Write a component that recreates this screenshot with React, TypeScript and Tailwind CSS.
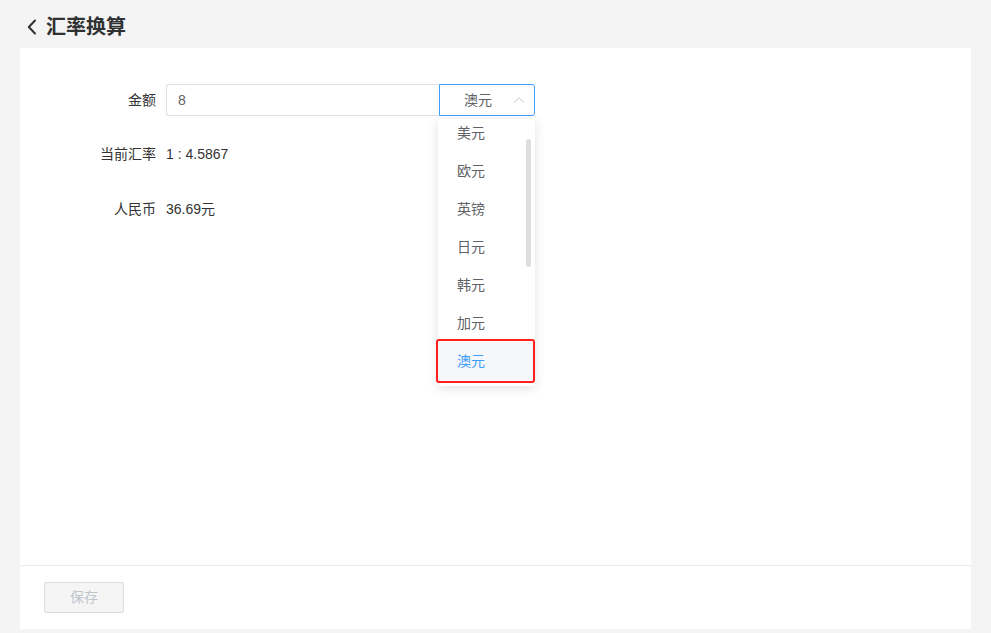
import { ChevronUp } from "lucide-react";

const currencies = ["美元", "欧元", "英镑", "日元", "韩元", "加元", "澳元"];

export default function App() {
  const selected = "澳元";

  return (
    <div className="flex h-[633px] flex-col bg-[#f4f4f4] text-[14px] text-[#333] [font-family:'Liberation_Sans','Noto_Sans_CJK_SC',sans-serif]">
      <header className="flex h-[48px] items-center gap-[9px] pl-[27px] pt-[5px]">
        <svg width="10" height="16" viewBox="0 0 10 16" className="text-[#303133]">
          <polyline points="8,1.5 1.8,8 8,14.5" fill="none" stroke="currentColor" strokeWidth="2" strokeLinecap="round" strokeLinejoin="round" />
        </svg>
        <h1 className="text-[20px] font-bold leading-none text-[#303133]">汇率换算</h1>
      </header>

      <main className="mx-[20px] mb-[4px] flex flex-1 flex-col bg-white">
        <div className="flex-1 pt-[36px]">
          <div className="flex items-center">
            <label className="w-[146px] pr-[10px] text-right">金额</label>
            <div className="flex h-[32px] w-[273px] items-center rounded-l-[3px] border border-r-0 border-[#dcdfe6] px-[11px] text-[#606266]">
              8
            </div>
            <div className="relative">
              <div className="flex h-[32px] w-[96px] items-center rounded-r-[3px] border border-[#409eff] pl-[24px] pr-[6px] text-[#606266]">
                <span className="flex-1">{selected}</span>
                <ChevronUp className="h-[18px] w-[18px] text-[#c0c4cc]" strokeWidth={1.3} />
              </div>
              <div className="absolute left-[-1px] top-[35px] z-10 h-[267px] w-[97px] rounded-[3px] bg-white shadow-[0_2px_12px_rgba(0,0,0,0.12)]">
                <div className="h-full overflow-hidden">
                  <ul className="-mt-[5px]">
                    {currencies.map((c) => (
                      <li
                        key={c}
                        className={
                          c === selected
                            ? "flex h-[38px] items-center bg-[#f5f7fa] pl-[19px] text-[#409eff]"
                            : "flex h-[38px] items-center pl-[19px] text-[#606266]"
                        }
                      >
                        {c}
                      </li>
                    ))}
                  </ul>
                </div>
                <div className="absolute right-[4px] top-[20px] h-[128px] w-[5px] rounded-full bg-[#dddee0]" />
                <div className="absolute left-[-2px] top-[220px] h-[44px] w-[99px] rounded-[3px] border-2 border-[#ff1f1f]" />
              </div>
            </div>
          </div>

          <div className="mt-[22px] flex items-center leading-[32px]">
            <label className="w-[146px] pr-[10px] text-right">当前汇率</label>
            <span>1 : 4.5867</span>
          </div>

          <div className="mt-[23px] flex items-center leading-[32px]">
            <label className="w-[146px] pr-[10px] text-right">人民币</label>
            <span>36.69元</span>
          </div>
        </div>

        <footer className="flex h-[64px] items-center border-t border-[#ebebeb] pl-[24px]">
          <button
            disabled
            className="h-[31px] w-[80px] rounded-[2px] border border-[#dcdcdc] bg-[#f5f5f5] text-[14px] text-[#c0c4cc]"
          >
            保存
          </button>
        </footer>
      </main>
    </div>
  );
}
